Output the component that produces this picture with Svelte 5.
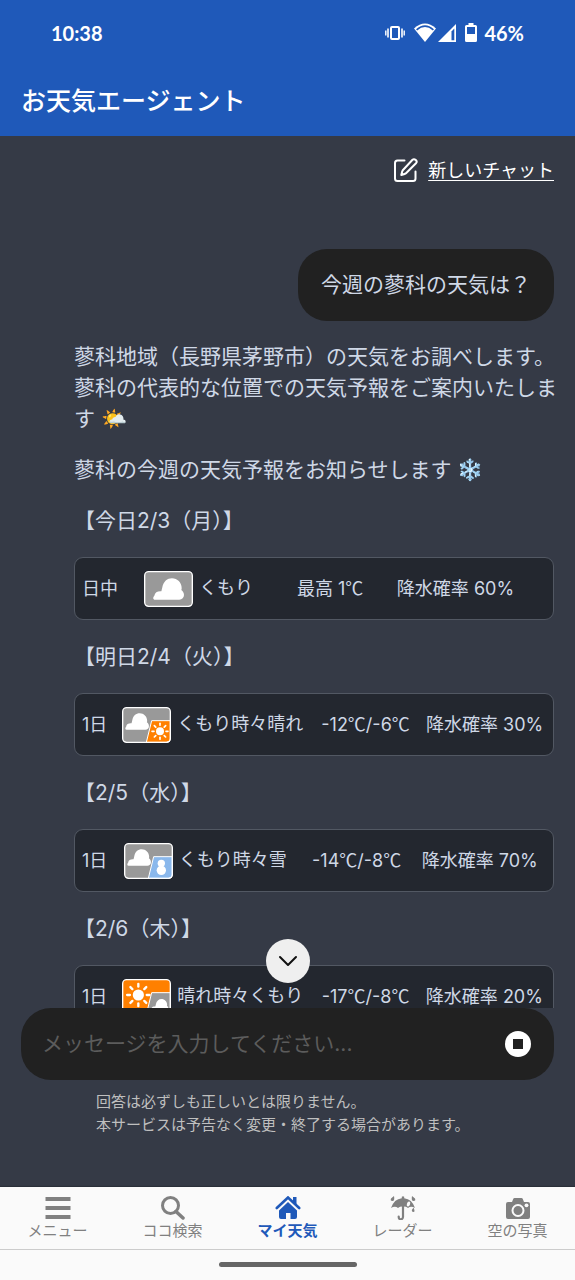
<script>
  const forecasts = [
    { date: '【今日2/3（月）】', span: '日中', icon: 'cloudy', label: 'くもり', temp: '最高 1℃', rain: '降水確率 60%' },
    { date: '【明日2/4（火）】', span: '1日', icon: 'cloudy-sunny', label: 'くもり時々晴れ', temp: '-12℃/-6℃', rain: '降水確率 30%' },
    { date: '【2/5（水）】', span: '1日', icon: 'cloudy-snow', label: 'くもり時々雪', temp: '-14℃/-8℃', rain: '降水確率 70%' },
    { date: '【2/6（木）】', span: '1日', icon: 'sunny-cloudy', label: '晴れ時々くもり', temp: '-17℃/-8℃', rain: '降水確率 20%' }
  ];

  const tabs = [
    { id: 'menu', label: 'メニュー' },
    { id: 'search', label: 'ココ検索' },
    { id: 'home', label: 'マイ天気' },
    { id: 'radar', label: 'レーダー' },
    { id: 'photo', label: '空の写真' }
  ];

  const angles = [0, 45, 90, 135, 180, 225, 270, 315];
  let active = $state('home');
  let message = $state('');
</script>

{#snippet cloud(x, y, scale)}
  <path
    transform="translate({x} {y}) scale({scale})"
    fill="#fff"
    d="M5 64C-1 64-2 57 3 52C5 42 13 38 24 39C25 36 26 31 27 27C30 10 42 0 56 0C72 0 85 13 85 29C85 31 85 33 84 35C89 38 92 44 92 50C92 58 86 64 78 64Z"
  />
{/snippet}

{#snippet sun(x, y, scale)}
  <g transform="translate({x} {y}) scale({scale})" fill="#fff" stroke="#fff" stroke-width="5" stroke-linecap="round">
    <circle r="12" stroke="none" />
    {#each angles as a}
      <path d="M0-18V-24" transform="rotate({a})" />
    {/each}
  </g>
{/snippet}

{#snippet weather(kind, label)}
  <svg class="weather" viewBox="0 0 147 108" role="img" aria-label={label}>
    <rect x="2" y="2" width="143" height="104" rx="12" fill={kind === 'sunny-cloudy' ? '#ff8000' : '#999'} />
    {#if kind === 'cloudy'}
      {@render cloud(28, 22, 1)}
    {:else}
      <path
        d="M89 41H145V96Q145 106 135 106H73Z"
        stroke="#fff"
        stroke-width="3"
        fill={kind === 'cloudy-sunny' ? '#ff8000' : kind === 'cloudy-snow' ? '#8ab8ec' : '#999'}
      />
      {#if kind === 'sunny-cloudy'}
        {@render sun(49, 48, 1.4)}
        {@render cloud(86, 60, 0.58)}
      {:else}
        {@render cloud(10, 19, 0.77)}
        {#if kind === 'cloudy-sunny'}
          {@render sun(114, 73, 1)}
        {:else}
          <circle cx="112" cy="61" r="11" fill="#fff" />
          <circle cx="112" cy="82" r="14" fill="#fff" />
        {/if}
      {/if}
    {/if}
    <rect x="2" y="2" width="143" height="104" rx="12" fill="none" stroke="#fff" stroke-width="4" />
  </svg>
{/snippet}

<div class="app">
  <header>
    <div class="status">
      <span>10:38</span>
      <div class="indicators">
        <svg width="20" height="20" viewBox="0 0 20 20" fill="none" stroke="#fff">
          <rect x="6" y="4" width="8" height="12" rx="1" stroke-width="2" />
          <path d="M3 5.5V14.5M17 5.5V14.5" stroke-width="1.6" />
          <path d="M.8 7.5V12.5M19.2 7.5V12.5" stroke-width="1.4" />
        </svg>
        <svg class="wifi" width="22" height="20" viewBox="0 0 22 20">
          <path d="M0 5.5Q11-4.500 22 5.500L11 19Z" fill="#fff" />
          <path d="M2.600 6.800Q11-.4 19.400 6.800" fill="none" stroke="#1f59b9" stroke-width="1.600" />
        </svg>
        <svg class="signal" width="18" height="20" viewBox="0 0 18 20">
          <path d="M18 1V19H0Z" fill="#fff" />
          <path d="M13.500 8.500L16.300 5.500V17.300H13.500Z" fill="#1f59b9" />
        </svg>
        <svg class="battery" width="12" height="20" viewBox="0 0 12 20">
          <path d="M3.500 0H8.500V2H10.500Q12 2 12 3.500V17.500Q12 19 10.500 19H1.500Q0 19 0 17.500V3.500Q0 2 1.500 2H3.500Z" fill="#fff" />
          <path d="M2 4H10V11H2Z" fill="#1f59b9" />
        </svg>
        <span>46%</span>
      </div>
    </div>
    <h1>お天気エージェント</h1>
  </header>

  <main>
    <div class="toolbar">
      <a href="#new">
        <svg width="26" height="26" viewBox="0 0 26 26" fill="none" stroke="#fff" stroke-width="2" stroke-linecap="round" stroke-linejoin="round">
          <path d="M12.500 2.500H5.500Q3 2.500 3 5V20.500Q3 23 5.500 23H21Q23.500 23 23.500 20.500V13.500" />
          <path d="M20.500 1.800Q22 .5 23.800 2Q25.500 3.800 24 5.300L14 15.300Q13.300 16 9.300 17Q10.200 13 10.800 12.200Z" />
        </svg>
        <span>新しいチャット</span>
      </a>
    </div>

    <div class="bubble">今週の蓼科の天気は？</div>

    <article>
      <p>蓼科地域（長野県茅野市）の天気をお調べします。蓼科の代表的な位置での天気予報をご案内いたします 🌤️</p>
      <p>蓼科の今週の天気予報をお知らせします ❄️</p>
      {#each forecasts as f}
        <h2>{f.date}</h2>
        <div class="card">
          <table>
            <tbody>
              <tr>
                <td>{f.span}</td>
                <td>{@render weather(f.icon, f.label)}{f.label}</td>
                <td>{#each f.temp.split(/(℃)/) as part}{#if part === '℃'}<span class="unit">℃</span>{:else}{part}{/if}{/each}</td>
                <td>{f.rain}</td>
              </tr>
            </tbody>
          </table>
        </div>
      {/each}
    </article>
  </main>

  <footer>
    <button class="down" aria-label="一番下へ">
      <svg width="20" height="20" viewBox="0 0 20 20" fill="none" stroke="#111" stroke-width="2" stroke-linecap="round" stroke-linejoin="round">
        <path d="M2 6L10 14L18 6" />
      </svg>
    </button>
    <form class="composer" onsubmit={(e) => e.preventDefault()}>
      <input type="text" bind:value={message} aria-label="メッセージ" placeholder="メッセージを入力してください..." />
      <button class="stop" type="button" aria-label="停止">
        <svg width="26" height="26" viewBox="0 0 26 26">
          <circle cx="13" cy="13" r="13" fill="#fff" />
          <rect x="8" y="8" width="10" height="10" fill="#212121" />
        </svg>
      </button>
    </form>
    <p class="notice">回答は必ずしも正しいとは限りません。<br />本サービスは予告なく変更・終了する場合があります。</p>
  </footer>

  <nav>
    {#each tabs as tab}
      <button class:active={active === tab.id} onclick={() => (active = tab.id)}>
        <svg width="26" height="24" viewBox="0 0 26 24" fill="currentColor">
          {#if tab.id === 'menu'}
            <path d="M.5 1H25.500V5H.5ZM.5 10H25.500V14H.5ZM.5 19H25.500V23H.5Z" />
          {:else if tab.id === 'search'}
            <g fill="none" stroke="currentColor">
              <circle cx="10.500" cy="9.500" r="8" stroke-width="3" />
              <path d="M16 15.500L23 22" stroke-width="3.500" stroke-linecap="round" />
            </g>
          {:else if tab.id === 'home'}
            <path d="M13 6L22 14.500V21Q22 23 20 23H15.500V17H11V23H6Q4 23 4 21V14.500Z" />
            <path d="M18 1H21.500V8H18Z" />
            <path d="M1.800 12L13 1.500L24.200 12" fill="none" stroke="currentColor" stroke-width="2.600" stroke-linecap="round" />
          {:else if tab.id === 'radar'}
            <path d="M1 12Q4 3 11.800 2.200V.8Q13-.4 14.200 .8V2.200Q22 3 25 12Q21 9.500 18 12Q15.500 9.500 13 11Q10.500 9.500 8 12Q5 9.500 1 12Z" />
            <path d="M13 10V21Q12.800 23.300 10.700 23.300Q8.700 23.300 8.700 21V20.500" fill="none" stroke="currentColor" stroke-width="2.200" stroke-linecap="round" />
            <path d="M4 0Q5 5 2.500 5Q0 5 1 2.500ZM22 0L25 2.500Q26 5 23.500 5Q21 5 22 0ZM23.500 11.500Q25.500 16 23.500 16Q21.500 16 21.800 14Z" />
            <ellipse cx="18.500" cy="8" rx="1.600" ry="2.600" transform="rotate(20 18.500 8)" fill="#fafafa" />
          {:else}
            <path d="M3 6H7L8.300 2.800Q8.600 2 9.600 2H16.400Q17.400 2 17.700 2.800L19 6H23Q25 6 25 8V21Q25 23 23 23H3Q1 23 1 21V8Q1 6 3 6Z" />
            <circle cx="13" cy="14.500" r="5.500" fill="none" stroke="#fafafa" stroke-width="2" />
            <circle cx="21.500" cy="9.300" r="1.900" fill="#fafafa" />
          {/if}
        </svg>
        <span>{tab.label}</span>
      </button>
    {/each}
  </nav>
  <div class="gesture"><i></i></div>
</div>

<style>
  :global(body) {
    background: #353a46;
  }
  .app {
    height: 100vh;
    display: flex;
    flex-direction: column;
    background: #353a46;
    color: #cfd8e6;
    font-family: Inter, 'Noto Sans CJK JP', sans-serif;
    font-size: 21px;
    line-height: 31px;
  }
  h1, h2, p {
    margin: 0;
    font-weight: 400;
    font-size: inherit;
  }
  button {
    border: 0;
    padding: 0;
    background: none;
    font: inherit;
    cursor: pointer;
  }
  svg {
    display: block;
    flex: none;
  }
  header {
    flex: none;
    background: #1f59b9;
    color: #fff;
  }
  .status {
    display: flex;
    justify-content: space-between;
    align-items: center;
    height: 66px;
    padding: 0 51px;
    font-family: Lato, sans-serif;
    font-size: 20px;
    font-weight: 700;
  }
  .indicators {
    display: flex;
    align-items: center;
  }
  .wifi { margin-left: 9px; }
  .signal { margin-left: 2px; }
  .battery { margin: 0 7px 0 9px; }
  h1 {
    padding: 15px 21px 19px;
    font-family: 'Noto Sans CJK JP', sans-serif;
    font-size: 25px;
    font-weight: 500;
    line-height: 36px;
  }
  main {
    flex: 1;
    min-height: 0;
    overflow-y: auto;
    scrollbar-width: none;
    display: flex;
    flex-direction: column;
  }
  .toolbar {
    flex: none;
    display: flex;
    justify-content: flex-end;
    padding: 19px 21px 63px;
  }
  .toolbar a {
    display: flex;
    align-items: center;
    gap: 10px;
    color: #fff;
    font-size: 18px;
    text-underline-offset: 3px;
  }
  .bubble {
    flex: none;
    align-self: flex-end;
    margin-right: 21px;
    padding: 20px 23px 21px;
    border-radius: 29px;
    background: #212121;
  }
  article {
    padding: 20px 16px 20px 74px;
  }
  p + p, p + h2 {
    margin-top: 20px;
  }
  .card {
    display: flex;
    align-items: center;
    min-height: 61px;
    margin: 21px 5px 21px 0;
    border: 1px solid #525863;
    border-radius: 9px;
    background: #23272f;
  }
  table {
    width: 100%;
    border-collapse: collapse;
    font-size: 18px;
  }
  td {
    padding: 0 7px;
    white-space: nowrap;
    vertical-align: middle;
  }
  .unit {
    font-family: 'Noto Sans CJK JP', sans-serif;
    line-height: 1;
  }
  .weather {
    display: inline-block;
    width: 49px;
    height: 36px;
    margin-right: 6px;
    vertical-align: middle;
  }
  footer {
    flex: none;
    position: relative;
    padding: 0 21px 51px;
  }
  .down {
    position: absolute;
    left: 50%;
    bottom: 100%;
    width: 44px;
    height: 44px;
    margin: 0 0 25px -22px;
    display: grid;
    place-items: center;
    border-radius: 50%;
    background: #efefef;
  }
  .composer {
    display: flex;
    align-items: center;
    padding: 20px 23px 21px 21px;
    border-radius: 30px;
    background: #212121;
  }
  input {
    flex: 1;
    min-width: 0;
    height: 31px;
    border: 0;
    padding: 0;
    outline: 0;
    background: none;
    color: #cfd8e6;
    font: inherit;
  }
  input::placeholder {
    color: #5c5c5c;
    opacity: 1;
  }
  .notice {
    padding: 10px 0 0 75px;
    color: #bfbfbf;
    font-size: 15px;
    line-height: 23px;
  }
  nav {
    flex: none;
    display: grid;
    grid-template-columns: repeat(5, 1fr);
    background: #fafafa;
    border-bottom: 1px solid #ccc;
    box-shadow: 0 -1px 1px #2a2f39;
  }
  nav button {
    display: flex;
    flex-direction: column;
    align-items: center;
    padding: 9px 0 7px;
    color: #808080;
    font-size: 15px;
    line-height: 22px;
  }
  nav button.active {
    color: #1f59b9;
    font-weight: 700;
  }
  .gesture {
    flex: none;
    display: grid;
    place-items: center;
    height: 28px;
    padding-bottom: 2px;
    background: #fafafa;
  }
  .gesture i {
    width: 24%;
    height: 5px;
    border-radius: 3px;
    background: #666;
  }
</style>
